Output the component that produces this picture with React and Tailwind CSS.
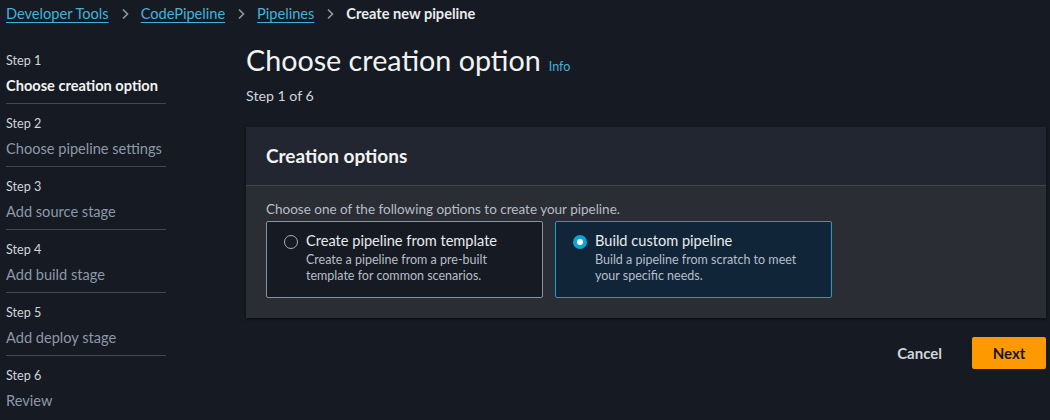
import React from "react";

const steps = [
  "Choose creation option",
  "Choose pipeline settings",
  "Add source stage",
  "Add build stage",
  "Add deploy stage",
  "Review",
];

function Chevron() {
  return (
    <svg width="10" height="12" viewBox="0 0 10 12" className="mx-[11px]">
      <path d="M3 1.5 L7.5 6 L3 10.5" fill="none" stroke="#8d99a8" strokeWidth="1.6" />
    </svg>
  );
}

function Card({ selected, title, desc }) {
  return (
    <div
      className={
        "w-[277px] h-[77px] rounded-[2px] border flex pl-[17px] pt-[8px] " +
        (selected ? "border-[#0aa5d2] bg-[#112539]" : "border-[#8a929d] bg-[#161a22]")
      }
    >
      <div className="pt-[5px] pr-[8px]">
        {selected ? (
          <div className="w-[14px] h-[14px] rounded-full bg-[#0aa5d2] flex items-center justify-center">
            <div className="w-[6px] h-[6px] rounded-full bg-white" />
          </div>
        ) : (
          <div className="w-[14px] h-[14px] rounded-full border-[1.5px] border-[#a6aeb8]" />
        )}
      </div>
      <div className="flex flex-col">
        <div className="text-[14.6px] leading-[22px] text-[#e9ebed]">{title}</div>
        <div className="text-[12.5px] leading-[16px] text-[#b6bec9] whitespace-pre-line">{desc}</div>
      </div>
    </div>
  );
}

export default function App() {
  return (
    <div
      className="w-[1050px] h-[420px] bg-[#161a22] overflow-hidden text-[#e9ebed]"
      style={{ fontFamily: "Lato, 'Open Sans', sans-serif" }}
    >
      <div className="flex items-center h-[28px] pl-[6px] text-[14.6px]">
        <a className="text-[#42b3d8] underline underline-offset-[3px]">Developer Tools</a>
        <Chevron />
        <a className="text-[#42b3d8] underline underline-offset-[3px]">CodePipeline</a>
        <Chevron />
        <a className="text-[#42b3d8] underline underline-offset-[3px]">Pipelines</a>
        <Chevron />
        <span className="font-bold text-[#e9ebed]">Create new pipeline</span>
      </div>
      <div className="flex">
        <nav className="w-[160px] ml-[6px] mt-[25px] flex flex-col">
          {steps.map((s, i) => (
            <div
              key={s}
              className={
                "flex flex-col " +
                (i > 0 ? "pt-[12px] " : "pt-[0px] ") +
                (i < steps.length - 1 ? "border-b border-[#414750] pb-[7px]" : "")
              }
            >
              <div className="text-[12.6px] leading-[16px] text-[#d1d5db]">Step {i + 1}</div>
              <div
                className={
                  "text-[14.6px] leading-[20px] mt-[7px] " +
                  (i === 0 ? "font-bold text-[#f2f3f3]" : "text-[#8d99a8]")
                }
              >
                {s}
              </div>
            </div>
          ))}
        </nav>
        <main className="ml-[80px] w-[800px] flex flex-col">
          <div className="flex items-baseline mt-[14px]">
            <h1 className="text-[28.7px] leading-[36px] text-[#f2f3f3]">Choose creation option</h1>
            <span className="ml-[8px] text-[12.5px] text-[#42b3d8]">Info</span>
          </div>
          <div className="text-[14.2px] leading-[20px] text-[#d1d5db] mt-[8px]">Step 1 of 6</div>
          <section className="mt-[21px] bg-[#2a2d33] shadow-[0_1px_3px_rgba(0,0,0,0.6)]">
            <div className="h-[59px] bg-[#222630] border-b border-[#414750] flex items-center pl-[20px]">
              <h2 className="text-[19px] font-bold text-[#f2f3f3]">Creation options</h2>
            </div>
            <div className="px-[20px] pt-[15px] pb-[20px]">
              <div className="text-[13.5px] leading-[16px] text-[#b6bec9]">
                Choose one of the following options to create your pipeline.
              </div>
              <div className="flex gap-[12px] mt-[4px]">
                <Card
                  title="Create pipeline from template"
                  desc={"Create a pipeline from a pre-built\ntemplate for common scenarios."}
                />
                <Card
                  selected
                  title="Build custom pipeline"
                  desc={"Build a pipeline from scratch to meet\nyour specific needs."}
                />
              </div>
            </div>
          </section>
          <div className="flex justify-end items-center mt-[19px] gap-[30px]">
            <button className="text-[15px] font-bold text-[#d1d5db]">Cancel</button>
            <button className="w-[74px] h-[32px] rounded-[2px] bg-[#ff9900] text-[15px] font-bold text-[#16191f]">
              Next
            </button>
          </div>
        </main>
      </div>
    </div>
  );
}
